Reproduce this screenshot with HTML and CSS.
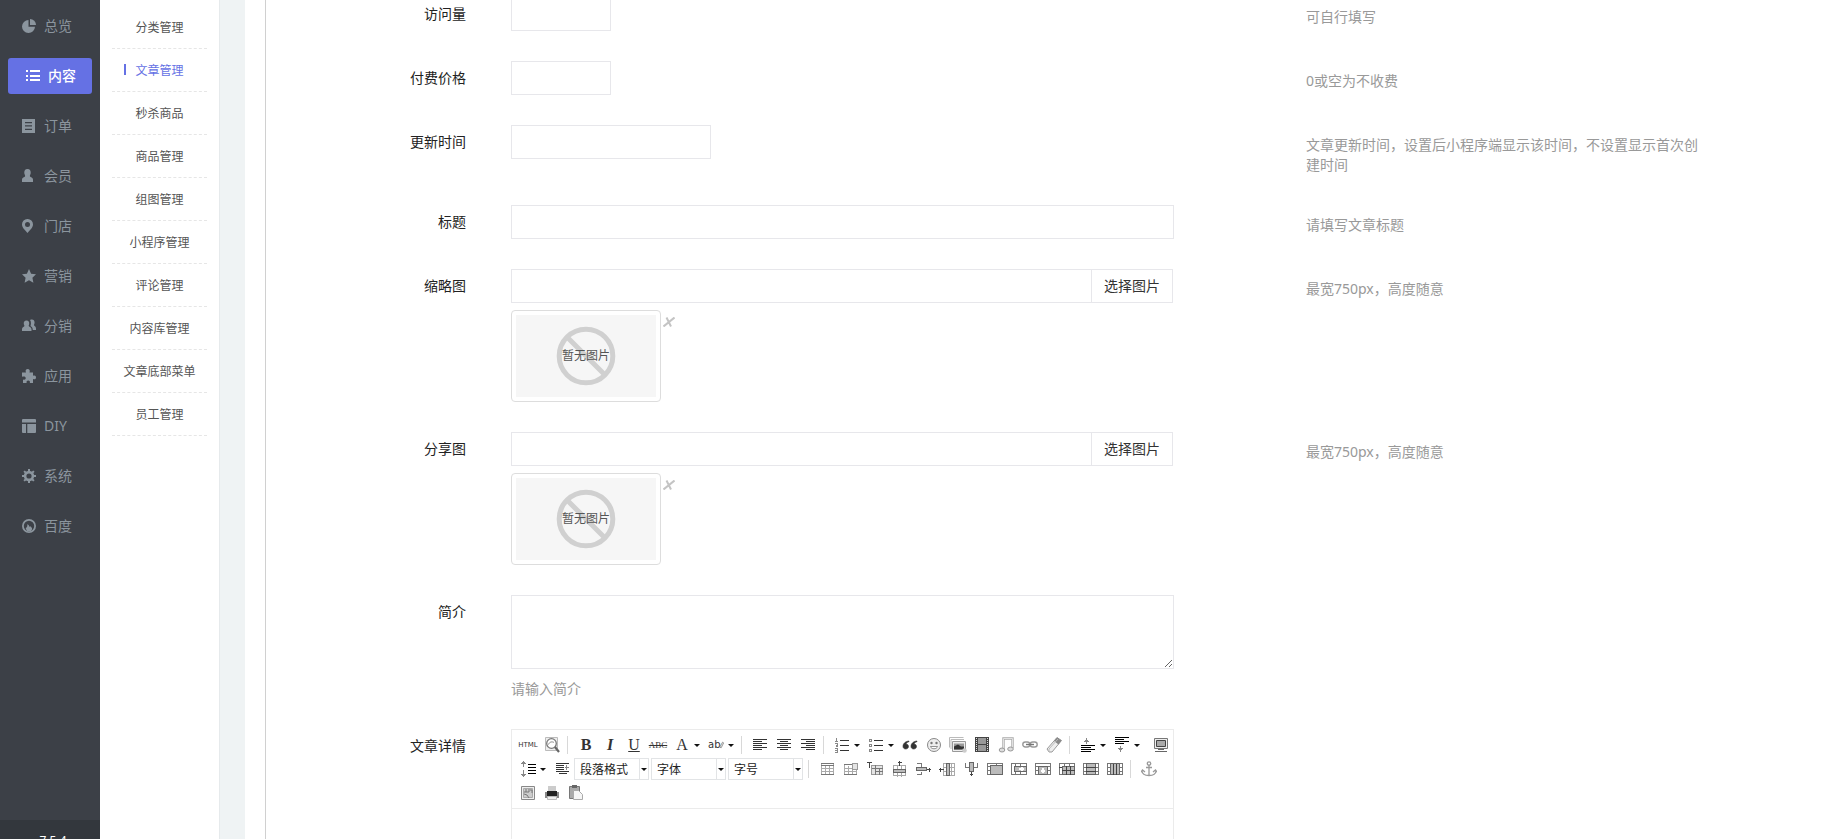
FILE: index.html
```html
<!DOCTYPE html>
<html lang="zh-CN">
<head>
<meta charset="utf-8">
<title>文章管理</title>
<link rel="stylesheet" href="styles.css">
</head>
<body>
<div class="app">
  <aside class="sidebar">
    <nav class="main-nav">
      <a class="nav-item" href="#"><svg class="nav-icon" viewBox="0 0 14 14"><path d="M6.500 1v6.700H13A6.500 6.500 0 1 1 6.500 1z"/><path d="M8 0a6 6 0 0 1 6 6H8z"/></svg>总览</a>
      <a class="nav-item active" href="#"><svg class="nav-icon" viewBox="0 0 14 14"><path d="M0 1h2v2H0zM4 1h10v2H4zM0 6h2v2H0zM4 6h10v2H4zM0 10h2v2H0zM4 10h10v2H4z"/></svg>内容</a>
      <a class="nav-item" href="#"><svg class="nav-icon" viewBox="0 0 14 14"><path fill-rule="evenodd" d="M0 0h13v14H0zM3 3v1.300h7V3zM3 6.300v1.300h7V6.300zM3 9.700V11h7V9.700z"/></svg>订单</a>
      <a class="nav-item" href="#"><svg class="nav-icon" viewBox="0 0 14 14"><path d="M5.500 0C8 0 9 2 8.700 4.300 8.500 6 7.500 6.500 8 7.500c.5.800 3 1 3 3V13H0v-2.500c0-2 2.500-2.200 3-3 .5-1-.5-1.500-.7-3.200C2 2 3 0 5.500 0z"/></svg>会员</a>
      <a class="nav-item" href="#"><svg class="nav-icon" viewBox="0 0 14 14"><path fill-rule="evenodd" d="M5.500 0A5.400 5.400 0 0 1 11 5.500C11 9 7 12 5.500 14 4 12 0 9 0 5.500A5.400 5.400 0 0 1 5.500 0zm0 3a2.500 2.500 0 1 0 0 5 2.500 2.500 0 0 0 0-5z"/></svg>门店</a>
      <a class="nav-item" href="#"><svg class="nav-icon" viewBox="0 0 14 14"><path d="M7 0l2.100 4.700 4.900.6-3.600 3.400 1 5.100L7 11.300l-4.400 2.500 1-5.100L0 5.300l4.900-.6z"/></svg>营销</a>
      <a class="nav-item" href="#"><svg class="nav-icon" viewBox="0 0 14 14"><path d="M4.500 1.500c2 0 3 1.500 2.700 3.500-.2 1.200-.8 1.600-.3 2.300.5.800 2.600 1 2.600 3V12H0v-1.700c0-2 1.800-2.200 2.300-3 .4-.7-.3-1.200-.5-2.300-.3-2 .7-3.500 2.700-3.500z"/><path d="M8 1c3-1.500 5 .5 4.500 3.200-.2 1.300-.8 1.500-.3 2.300.4.600 1.800 1 1.800 3V11h-3.200c0-2-.8-2.900-1.700-3.500-.9-.6-.5-1-.3-2.100C9.100 3.500 8.800 2 8 1z"/></svg>分销</a>
      <a class="nav-item" href="#"><svg class="nav-icon" viewBox="0 0 14 14"><path d="M4 3.500C3 1.500 4 0 5.700 0s2.600 1.500 1.800 3.500H11v3.300c2-.8 3 .2 3 1.600s-1 2.300-3 1.500V14H7.800c.6-1.700-.2-2.600-1.600-2.600-1.300 0-2.100.9-1.500 2.600H1v-3.500c1.900.6 2.700-.2 2.700-1.500 0-1.300-1.200-2-3.700-1.300V3.500z"/></svg>应用</a>
      <a class="nav-item" href="#"><svg class="nav-icon" viewBox="0 0 14 14"><path d="M1 0h12a1 1 0 0 1 1 1v2.500H0V1a1 1 0 0 1 1-1zM0 5h4v9H1a1 1 0 0 1-1-1zM5.300 5H14v8a1 1 0 0 1-1 1H5.300z"/></svg>DIY</a>
      <a class="nav-item" href="#"><svg class="nav-icon" viewBox="0 0 14 14"><circle cx="7" cy="7" r="3.900" fill="none" stroke="currentColor" stroke-width="2.600"/><path d="M6 0h2v2.500H6zM6 11.500h2V14H6zM0 6h2.500v2H0zM11.500 6H14v2h-2.500zM1.400 2.800l1.400-1.400 1.700 1.700-1.400 1.400zM9.500 10.900l1.400-1.400 1.700 1.700-1.400 1.400zM11.200 1.400l1.400 1.400-1.700 1.700-1.400-1.400zM3.100 9.500l1.400 1.400-1.700 1.700-1.400-1.400z"/></svg>系统</a>
      <a class="nav-item" href="#"><svg class="nav-icon" viewBox="0 0 14 14"><circle cx="7" cy="7" r="6.100" fill="none" stroke="currentColor" stroke-width="1.800"/><path d="M5.500 5l1.500 1.500V8l1-1 2 2v1.500L9 12H5l-1.300-2.500L5.200 7.500z"/></svg>百度</a>
    </nav>
    <div class="version">7.5.4</div>
  </aside>

  <nav class="sub-nav">
    <a class="sub-item" href="#">分类管理</a>
    <a class="sub-item current" href="#">文章管理</a>
    <a class="sub-item" href="#">秒杀商品</a>
    <a class="sub-item" href="#">商品管理</a>
    <a class="sub-item" href="#">组图管理</a>
    <a class="sub-item" href="#">小程序管理</a>
    <a class="sub-item" href="#">评论管理</a>
    <a class="sub-item" href="#">内容库管理</a>
    <a class="sub-item" href="#">文章底部菜单</a>
    <a class="sub-item" href="#">员工管理</a>
  </nav>

  <main class="content">
    <form class="panel">
      <div class="row">
        <label class="row-label" for="visits">访问量</label>
        <div class="field"><input class="input short" id="visits" type="text"></div>
        <p class="help">可自行填写</p>
      </div>
      <div class="row">
        <label class="row-label" for="price">付费价格</label>
        <div class="field"><input class="input short" id="price" type="text"></div>
        <p class="help">0或空为不收费</p>
      </div>
      <div class="row">
        <label class="row-label" for="updated">更新时间</label>
        <div class="field"><input class="input medium" id="updated" type="text"></div>
        <p class="help">文章更新时间，设置后小程序端显示该时间，不设置显示首次创建时间</p>
      </div>
      <div class="row">
        <label class="row-label" for="title">标题</label>
        <div class="field"><input class="input" id="title" type="text"></div>
        <p class="help">请填写文章标题</p>
      </div>
      <div class="row">
        <label class="row-label" for="thumb">缩略图</label>
        <div class="field">
          <div class="picker"><input class="input" id="thumb" type="text"><button class="pick" type="button">选择图片</button></div>
          <div class="preview">
            <div class="thumb"><div class="no-image"><svg class="ban" viewBox="0 0 60 60"><circle cx="30" cy="30" r="26.800"/><path d="M11 11l38 38"/></svg><span class="no-image-text">暂无图片</span></div></div>
            <button class="remove" type="button" aria-label="删除"><svg viewBox="0 0 12 10"><path d="M3.500.500l4.500 9M11.500.500l-11 9"/></svg></button>
          </div>
        </div>
        <p class="help">最宽750px，高度随意</p>
      </div>
      <div class="row">
        <label class="row-label" for="share">分享图</label>
        <div class="field">
          <div class="picker"><input class="input" id="share" type="text"><button class="pick" type="button">选择图片</button></div>
          <div class="preview">
            <div class="thumb"><div class="no-image"><svg class="ban" viewBox="0 0 60 60"><circle cx="30" cy="30" r="26.800"/><path d="M11 11l38 38"/></svg><span class="no-image-text">暂无图片</span></div></div>
            <button class="remove" type="button" aria-label="删除"><svg viewBox="0 0 12 10"><path d="M3.500.500l4.500 9M11.500.500l-11 9"/></svg></button>
          </div>
        </div>
        <p class="help">最宽750px，高度随意</p>
      </div>
      <div class="row">
        <label class="row-label" for="intro">简介</label>
        <div class="field">
          <textarea class="input area" id="intro"></textarea>
          <p class="help">请输入简介</p>
        </div>
      </div>
      <div class="row">
        <label class="row-label" for="detail">文章详情</label>
        <div class="field">
          <div class="editor">
            <div class="toolbar">
              <div class="tools">
                <button class="tool" type="button"><span class="glyph-html">HTML</span></button>
                <button class="tool" type="button"><svg viewBox="0 0 16 16"><path d="M1.500.500h12v13h-12z" fill="#eee" stroke="#bbb"/><circle cx="7.500" cy="6.500" r="4.800" fill="#fff" stroke="#777" stroke-width="1.300"/><path d="M4.500 7.500c1-3 4-3 5.500-2" fill="none" stroke="#888"/><path d="M11 10l4 5" stroke="#666" stroke-width="2.200"/></svg></button>
                <span class="sep"></span>
                <button class="tool" type="button"><span class="glyph bold">B</span></button>
                <button class="tool" type="button"><span class="glyph italic">I</span></button>
                <button class="tool" type="button"><span class="glyph under">U</span></button>
                <button class="tool" type="button"><span class="glyph strike">ABC</span></button>
                <button class="tool drop" type="button"><span class="glyph">A</span></button>
                <button class="tool drop" type="button"><span class="glyph-ab">ab</span><svg class="marker" viewBox="0 0 7 12"><path d="M1 9l4-7 1.500 1L3 10z" fill="#eee" stroke="#777"/></svg></button>
                <span class="sep"></span>
                <button class="tool" type="button"><svg class="lines" viewBox="0 0 16 16"><path d="M1 2.500h14M1 4.500h9M1 6.500h14M1 8.500h9M1 10.500h14M1 12.500h9"/></svg></button>
                <button class="tool" type="button"><svg class="lines" viewBox="0 0 16 16"><path d="M1 2.500h14M4 4.500h8M1 6.500h14M4 8.500h8M1 10.500h14M4 12.500h8"/></svg></button>
                <button class="tool" type="button"><svg class="lines" viewBox="0 0 16 16"><path d="M1 2.500h14M6 4.500h9M1 6.500h14M6 8.500h9M1 10.500h14M6 12.500h9"/></svg></button>
                <span class="sep"></span>
                <button class="tool drop" type="button"><svg class="lines" viewBox="0 0 16 16"><path d="M6 3.500h9M6 8.500h9M6 13.500h9"/><path d="M1.500 1.500h1v3M1 4.500h3M1 6.500h2v2h-1v1h2M1 11.500h2v4h-2M1 13.500h2" class="soft"/></svg></button>
                <button class="tool drop" type="button"><svg class="lines" viewBox="0 0 16 16"><path d="M6 3.500h9M6 8.500h9M6 13.500h9"/><path d="M1.500 2.500h2v2h-2zM1.500 7.500h2v2h-2zM1.500 12.500h2v2h-2z" class="soft"/></svg></button>
                <button class="tool" type="button"><svg viewBox="0 0 16 16"><path d="M7 4C3.500 4.300 1 6.500 1 9.300 1 11 2.200 12 3.700 12S6.500 11 6.500 9.500 5.400 7 4 7c.5-1.300 1.500-2 3-2.300zM15 4c-3.500.3-6 2.500-6 5.300C9 11 10.200 12 11.700 12s2.800-1 2.800-2.500S13.400 7 12 7c.5-1.300 1.500-2 3-2.300z" fill="#333" stroke="#333" stroke-width=".6"/></svg></button>
                <button class="tool" type="button"><svg viewBox="0 0 16 16"><circle cx="8" cy="8" r="6.500" fill="#eee" stroke="#888"/><circle cx="5.500" cy="6" r="1.200" fill="#777"/><circle cx="10.500" cy="6" r="1.200" fill="#777"/><path d="M4.500 9.500h7c-.5 3-6.500 3-7 0z" fill="#fff" stroke="#777" stroke-width=".8"/></svg></button>
                <button class="tool" type="button"><svg class="image-tool" viewBox="0 0 18 16"><path d="M.5 10.500v-10h14M2 12V2.500h13" fill="none" stroke="#bbb"/><path d="M3.500 4.500h13v10h-13z" fill="#eee" stroke="#999"/><path d="M5 6.500h10v6H5z" fill="#999"/><path d="M5 9.500l4-2 3 2h3v3H5z" fill="#333"/><circle cx="15.500" cy="13.500" r="2.300" fill="#ccc"/></svg></button>
                <button class="tool" type="button"><svg viewBox="0 0 16 16" shape-rendering="crispEdges"><path d="M1 0h14v15H1z" fill="#444"/><path d="M4 1h8v6H4zM4 8h8v6H4z" fill="#999"/><path d="M2.500 1v14M13.500 1v14" stroke="#ddd" stroke-dasharray="1 1"/></svg></button>
                <button class="tool" type="button"><svg viewBox="0 0 16 16"><path d="M5.500 12V1.500h9V11" fill="none" stroke="#aaa" stroke-width="2.400"/><path d="M5.500 12V1.500h9V11" fill="none" stroke="#eee" stroke-width=".8"/><ellipse cx="4" cy="13" rx="2.800" ry="2" fill="#ddd" stroke="#999"/><ellipse cx="12.500" cy="12" rx="2.800" ry="2" fill="#ddd" stroke="#999"/></svg></button>
                <button class="tool" type="button"><svg viewBox="0 0 16 16"><rect x=".8" y="5" width="7" height="5" rx="2.500" fill="none" stroke="#999" stroke-width="1.400"/><rect x="8.200" y="5" width="7" height="5" rx="2.500" fill="none" stroke="#999" stroke-width="1.400"/><path d="M4 7.500h8" stroke="#777" stroke-width="1.400"/></svg></button>
                <button class="tool" type="button"><svg viewBox="0 0 16 16"><path d="M1 12L11 .500l4.500 3L6 15H3z" fill="#eee" stroke="#999"/><path d="M8 4l3-3.500 4.500 3-3 4z" fill="#888"/><path d="M3 15V12L12 2" fill="none" stroke="#bbb"/></svg></button>
                <span class="sep wide"></span>
                <button class="tool drop" type="button"><svg class="lines dark" viewBox="0 0 16 16"><path d="M1 8.500h14M1 10.500h10M1 12.500h14M1 14.500h10"/><path class="soft" d="M6.500 1v6M5 3.500h3M4 4.500h5"/></svg></button>
                <button class="tool drop" type="button"><svg class="lines dark" viewBox="0 0 16 16"><path d="M1 .5h14M1 2.500h9M1 4.500h14M1 6.500h9"/><path class="soft" d="M6.500 9v6M5 12.500h3M4 11.500h5"/></svg></button>
                <button class="tool last" type="button"><svg viewBox="0 0 16 16"><path d="M1.500 1.500h13v10h-13z" fill="#eee" stroke="#777"/><path d="M3.500 3.500h9v6h-9z" fill="#aaa" stroke="#444"/><path d="M5 12h6v1H5zM2 14h12v1H2z" fill="#666"/></svg></button>
              </div>
              <div class="tools">
                <button class="tool drop" type="button"><svg class="lines dark" viewBox="0 0 16 16"><path d="M8 3.500h8M8 6.500h8M8 9.500h8M8 12.500h8"/><path class="soft" d="M3.500 0v6M2 1.500h3M3.500 9v7M2 14.500h3M1 2.500h5M1 13.500h5"/></svg></button>
                <button class="tool" type="button"><svg class="lines" viewBox="0 0 16 16"><path d="M2 2.500h13M2 4.500h8M2 6.500h8M2 8.500h8M2 10.500h13M5 12.500h8"/><path class="soft" d="M11 6.500h4M12.500 4v5"/></svg></button>
                <div class="combo"><select aria-label="段落格式"><option>段落格式</option></select><span class="caret"></span></div>
                <div class="combo"><select aria-label="字体"><option>字体</option></select><span class="caret"></span></div>
                <div class="combo"><select aria-label="字号"><option>字号</option></select><span class="caret"></span></div>
                <span class="sep"></span>
                <button class="tool" type="button"><svg class="cells" viewBox="0 0 16 16"><path class="light" d="M2.500 2.500h12v11h-12zM2 7.500h13M2 10.500h13M6.500 5v9M10.500 5v9"/><path d="M2 2.500h13M2 4.500h13M2 13.500h13"/></svg></button>
                <button class="tool" type="button"><svg class="cells" viewBox="0 0 16 16"><path class="light" d="M1.500 3.500h12v10h-12zM1.500 7.500h12M1.500 10.500h12M5.500 5v9M9.500 5v9"/><path d="M1 3.500h8M1 13.500h13"/><path class="pale" d="M9.500 2.500h5v6h-5z"/></svg></button>
                <button class="tool" type="button"><svg class="cells" viewBox="0 0 16 16"><path class="ink" d="M0 1.500h5M2.500 1v6"/><path class="pale" d="M4.500 4.500h11v9h-11z"/><path d="M8.500 4v10M5 7.500h11M12.500 8v6M8 10.500h8"/></svg></button>
                <button class="tool" type="button"><svg class="cells" viewBox="0 0 16 16"><path class="light" d="M2.500 4.500h12v10h-12zM6.500 4v12M10.500 4v12"/><path class="shade" d="M2.500 8.500h12v3h-12z"/><path class="ink" d="M8.500 0v5M7 1.500h4"/></svg></button>
                <button class="tool" type="button"><svg class="cells" viewBox="0 0 16 16"><path d="M2 2.500h4v3M2 13.500h4v-3"/><path class="shade" d="M1.500 6.500h10v3h-10z"/><path class="ink" d="M12 8.500h4M14.500 6.500v4"/></svg></button>
                <button class="tool" type="button"><svg class="cells" viewBox="0 0 16 16"><path class="light" d="M4.500 2.500h11v12h-11zM4 6.500h12M4 10.500h12M12.500 2v13"/><path class="shade" d="M7.500 2.500h3v12h-3z"/><path class="ink" d="M0 8.500h5M1.500 6.500v4"/></svg></button>
                <button class="tool" type="button"><svg class="cells" viewBox="0 0 16 16"><path d="M2.500 2v4h4M14.500 2v4h-4"/><path class="shade" d="M6.500 1.500h4v9h-4z"/><path class="ink" d="M8.500 11v4M7 13.500h3"/></svg></button>
                <button class="tool" type="button"><svg class="cells" viewBox="0 0 16 16"><path d="M.5 2.500h15v11H.5zM0 5.500h4M0 9.500h4M9.500 2v3"/><path class="shade" d="M3.500 4.500h12v9h-12z"/></svg></button>
                <button class="tool" type="button"><svg class="cells" viewBox="0 0 16 16"><path d="M.5 2.500h15v11H.5zM4.500 2v12M9.500 2v12"/><path class="shade" d="M3.500 5.500h12v5h-12z"/><path class="white" d="M8 8h5M11 6v4"/></svg></button>
                <button class="tool" type="button"><svg class="cells" viewBox="0 0 16 16"><path d="M.5 2.500h15v11H.5zM0 5.500h16M0 9.500h16"/><path class="shade" d="M3.500 5.500h9v8h-9z"/><path class="white" d="M8 7v5M6 10h4"/></svg></button>
                <button class="tool" type="button"><svg class="cells" viewBox="0 0 16 16"><path d="M.5 2.500h15v11H.5zM5.500 2v3M10.500 2v3"/><path class="shade" d="M3.500 5.500h12v8h-12z"/><path class="ink" d="M7.500 5v9M11.500 5v9M3 9.500h13M0 6.500h3"/></svg></button>
                <button class="tool" type="button"><svg class="cells" viewBox="0 0 16 16"><path d="M.5 2.500h15v11H.5zM0 6.500h16M0 10.500h16"/><path class="shade" d="M3.500 2.500h9v11h-9z"/><path class="ink" d="M3 6.500h10M3 10.500h10"/></svg></button>
                <button class="tool" type="button"><svg class="cells" viewBox="0 0 16 16"><path d="M.5 2.500h15v11H.5zM0 6.500h16M0 10.500h16"/><path class="shade" d="M3.500 2.500h9v11h-9z"/><path class="ink" d="M6.500 3v11M9.500 3v11"/></svg></button>
                <span class="sep"></span>
                <button class="tool" type="button"><svg viewBox="0 0 16 16" fill="none" stroke="#999" stroke-width="1.300"><circle cx="8" cy="2.500" r="1.700"/><path d="M8 4v11M5 6.500h6M1 10c.5 6 13.500 6 14 0M0 11l1.500-2L4 11M12 11l2.500-2 1.500 2"/></svg></button>
              </div>
              <div class="tools">
                <button class="tool" type="button"><svg viewBox="0 0 16 16"><path d="M1.500 1.500h13v13h-13z" fill="#eee" stroke="#888"/><path d="M3.500 3.500h9v9h-9z" fill="#ccc" stroke="#aaa"/><path d="M4 9l3 1 2 3M6 4v3h3V4M10 5h2v3M5 6v2" stroke="#777" fill="none"/></svg></button>
                <button class="tool" type="button"><svg viewBox="0 0 16 16"><path d="M4 1h8v6H4z" fill="#ccc"/><path d="M1 7h14v6H1z" fill="#888"/><path d="M3 6h10v5H3z" fill="#222"/><path d="M3.500 11.500h9v3h-9z" fill="#eee" stroke="#bbb"/></svg></button>
                <button class="tool" type="button"><svg viewBox="0 0 16 16"><path d="M1.500 1.500h10v12h-10z" fill="#aaa" stroke="#777"/><path d="M4 0h5v3H4z" fill="#666"/><path d="M5.500 5.500h5l4 4v5h-9z" fill="#f5f5f5" stroke="#aaa"/></svg></button>
              </div>
            </div>
            <textarea class="canvas" id="detail"></textarea>
          </div>
        </div>
      </div>
    </form>
  </main>
</div>
</body>
</html>
```

FILE: styles.css
```css
* { box-sizing: border-box; }

body {
  margin: 0;
  overflow: hidden;
  background: #fff;
  color: #222;
  font: 14px/20px "Noto Sans", "Noto Sans CJK SC", sans-serif;
}

button, input, select, textarea { font: inherit; color: inherit; }
a { color: inherit; text-decoration: none; }

.app { display: flex; height: 100vh; overflow: hidden; }

/* primary navigation */
.sidebar {
  display: flex;
  flex: none;
  flex-direction: column;
  width: 100px;
  background: #3c4047;
  color: #8b959e;
}
.main-nav {
  display: flex;
  flex: 1;
  flex-direction: column;
  gap: 14px;
  padding: 8px;
}
.nav-item {
  display: flex;
  align-items: center;
  gap: 8px;
  height: 36px;
  padding-left: 14px;
  border-radius: 3px;
}
.nav-item.active {
  padding-left: 18px;
  background: #6571e4;
  color: #fff;
  font-weight: 500;
}
.nav-icon { width: 14px; height: 14px; fill: currentColor; }
.version {
  height: 19px;
  overflow: hidden;
  background: #33373d;
  color: #fff;
  font-size: 12px;
  line-height: 42px;
  text-align: center;
  padding-left: 6px;
}

/* secondary navigation */
.sub-nav {
  flex: none;
  width: 120px;
  padding: 6px 12px;
  border-right: 1px solid #e6eaec;
}
.sub-item {
  position: relative;
  display: block;
  padding-top: 2px;
  border-bottom: 1px dashed #e6e6e6;
  color: #555;
  font-size: 12px;
  line-height: 40px;
  text-align: center;
}
.sub-item.current { color: #6571e4; }
.sub-item.current::before {
  content: "";
  position: absolute;
  top: 15px;
  left: 12px;
  width: 2px;
  height: 11px;
  background: #6571e4;
}

/* form */
.content {
  flex: 1;
  min-width: 0;
  padding-left: 45px;
  background: linear-gradient(to right, #eff3f4 25px, #fff 25px);
}
.panel {
  display: flex;
  flex-direction: column;
  gap: 30px;
  margin-top: -3px;
  border-left: 1px solid #d0d0d0;
}
.row {
  display: grid;
  grid-template-columns: 200fr 45fr 663fr 132fr 400fr 128fr;
  align-items: start;
}
.row-label {
  grid-column: 1;
  line-height: 34px;
  text-align: right;
}
.field { grid-column: 3; min-width: 0; }
.row > .help { grid-column: 5; }
.help {
  margin: 0;
  padding-top: 10px;
  color: #999;
}
.input {
  display: block;
  width: 100%;
  height: 34px;
  padding: 6px 12px;
  border: 1px solid #e7e7eb;
  border-radius: 0;
  background: #fff;
  outline: 0;
}
.short { width: 100px; }
.medium { width: 200px; }
.area { height: 74px; resize: vertical; }

.picker { display: flex; padding-right: 1px; }
.pick {
  flex: none;
  height: 34px;
  padding: 0 12px;
  border: 1px solid #e7e7eb;
  border-left: 0;
  background: #fff;
  color: #333;
}
.preview {
  display: flex;
  align-items: flex-start;
  gap: 2px;
  margin-top: 7px;
}
.thumb {
  width: 150px;
  height: 92px;
  padding: 4px;
  border: 1px solid #ddd;
  border-radius: 4px;
}
.no-image {
  display: grid;
  place-items: center;
  height: 100%;
  background: #f6f6f6;
}
.ban, .no-image-text { grid-area: 1 / 1; }
.ban {
  width: 60px;
  height: 60px;
  fill: none;
  stroke: #d0d0d0;
  stroke-width: 5;
}
.no-image-text {
  z-index: 1;
  color: #555;
  font-size: 12px;
}
.remove {
  display: flex;
  padding: 7px 0 0;
  border: 0;
  background: none;
}
.remove svg {
  width: 12px;
  height: 10px;
  fill: none;
  stroke: #c4c4c4;
  stroke-width: 2;
}

/* rich text editor */
.editor { border: 1px solid #ebebeb; }
.toolbar {
  padding: 3px 4px;
  border-bottom: 1px solid #ebebeb;
}
.tools { display: flex; height: 24px; align-items: center; }
.tool {
  display: flex;
  flex: none;
  align-items: center;
  justify-content: center;
  width: 24px;
  height: 24px;
  padding: 0;
  border: 0;
  background: none;
  color: #333;
}
.tool svg { flex: none; width: 16px; height: 16px; }
.tool .image-tool { width: 18px; }
.drop {
  justify-content: flex-start;
  width: 34px;
  padding-left: 4px;
}
.drop::after {
  content: "";
  margin-left: 4px;
  border: solid transparent;
  border-width: 3px 3px 0;
  border-top-color: #111;
}
.last { margin-left: 5px; }
.sep {
  flex: none;
  width: 10px;
  height: 18px;
  background: linear-gradient(#d8d8d8, #d8d8d8) 3px 0 / 1px 100% no-repeat;
}

.glyph { width: 16px; font: 16px/18px "Liberation Serif", serif; text-align: center; }
.bold { font-weight: bold; }
.italic { font-style: italic; font-weight: bold; }
.under { text-decoration: underline; }
.strike { width: auto; font-size: 9px; text-decoration: line-through; }
.glyph-html { font: 7px/16px "DejaVu Sans", sans-serif; }
.glyph-ab { width: 11px; font: 10px/16px "DejaVu Sans", sans-serif; }
.tool .marker { width: 5px; height: 12px; }

.lines { fill: none; stroke: #333; shape-rendering: crispEdges; }
.lines.dark { stroke: #000; }
.lines .soft { stroke: #888; }
.cells { fill: none; stroke: #777; shape-rendering: crispEdges; }
.cells .light { stroke: #aaa; }
.cells .pale { fill: #e4e4e4; stroke: #999; }
.cells .shade { fill: #bbb; stroke: #666; }
.cells .ink { stroke: #444; }
.cells .white { stroke: #fff; stroke-width: 2; }

.combo {
  display: flex;
  flex: none;
  width: 75px;
  height: 22px;
  margin-right: 2px;
  border: 1px solid #e2e4e6;
}
.combo select {
  flex: 1;
  min-width: 0;
  padding: 1px 0 0 5px;
  border: 0;
  border-right: 1px solid #e2e4e6;
  background: none;
  appearance: none;
  font-size: 12px;
}
.caret {
  display: grid;
  place-items: center;
  width: 8px;
}
.caret::after {
  content: "";
  border: solid transparent;
  border-width: 3px 3px 0;
  border-top-color: #111;
}
.canvas {
  display: block;
  width: 100%;
  height: 300px;
  border: 0;
  outline: 0;
  resize: none;
}
```
